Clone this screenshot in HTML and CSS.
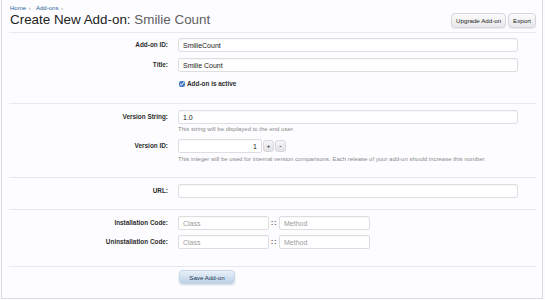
FILE: index.html
```html
<!DOCTYPE html>
<html lang="en">

<head>
    <meta charset="UTF-8">
    <meta name="viewport" content="width=device-width, initial-scale=1.0">
    <title>Create New Add-on</title>
    <link rel="stylesheet" href="styles.css">
</head>

<body>
    <div class="page">
        <div class="breadcrumb">
            <a href="#">Home</a> <span class="sep">&rsaquo;</span>
            <a href="#">Add-ons</a> <span class="sep">&rsaquo;</span>
        </div>
        <div class="title-bar">
            <h1>Create New Add-on: <span class="sub">Smilie Count</span></h1>
            <div class="top-ctrls">
                <button class="button">Upgrade Add-on</button>
                <button class="button">Export</button>
            </div>
        </div>

        <form class="form">
            <div class="section s1">
                <div class="row">
                    <label>Add-on ID:</label>
                    <div class="field"><input type="text" class="text" value="SmilieCount"></div>
                </div>
                <div class="row">
                    <label>Title:</label>
                    <div class="field"><input type="text" class="text" value="Smilie Count"></div>
                </div>
                <div class="row check-row">
                    <span></span>
                    <label class="check"><input type="checkbox" checked> Add-on is active</label>
                </div>
            </div>

            <div class="section s2">
                <div class="row">
                    <label>Version String:</label>
                    <div class="field">
                        <input type="text" class="text" value="1.0">
                        <p class="hint">This string will be displayed to the end user.</p>
                    </div>
                </div>
                <div class="row">
                    <label>Version ID:</label>
                    <div class="field">
                        <div class="spin">
                            <input type="text" class="text num" value="1">
                            <button type="button" class="spin-btn">+</button>
                            <button type="button" class="spin-btn">-</button>
                        </div>
                        <p class="hint">This integer will be used for internal version comparisons. Each release of your add-on should increase this number.</p>
                    </div>
                </div>
            </div>

            <div class="section s3">
                <div class="row">
                    <label>URL:</label>
                    <div class="field"><input type="text" class="text"></div>
                </div>
            </div>

            <div class="section s4">
                <div class="row">
                    <label>Installation Code:</label>
                    <div class="field callback">
                        <input type="text" class="text short" placeholder="Class">
                        <span class="colons">::</span>
                        <input type="text" class="text short" placeholder="Method">
                    </div>
                </div>
                <div class="row">
                    <label>Uninstallation Code:</label>
                    <div class="field callback">
                        <input type="text" class="text short" placeholder="Class">
                        <span class="colons">::</span>
                        <input type="text" class="text short" placeholder="Method">
                    </div>
                </div>
            </div>

            <div class="submit-row">
                <span></span>
                <div class="submit-cell"><button type="button" class="button primary">Save Add-on</button></div>
            </div>
        </form>
    </div>
</body>

</html>
```

FILE: styles.css
```css
* {
    margin: 0;
    padding: 0;
    box-sizing: border-box;
    font-family: "Liberation Sans", Arial, sans-serif;
}

body {
    background-color: #fcfcfe;
    height: 300px;
    overflow: hidden;
    font-size: 7px;
    line-height: 8px;
}

.page {
    margin: 0 2px 0 1px;
    height: 299px;
    padding: 0 6px 0 7px;
    border: 1px solid #dcdde2;
    border-top: none;
    background: #fdfdff;
}

.breadcrumb {
    padding-top: 5px;
    height: 13px;
    font-size: 6px;
    line-height: 7px;
    padding-left: 1px;
}

.breadcrumb a {
    color: #2a5f98;
    text-decoration: none;
    margin-right: 1px;
}

.breadcrumb .sep {
    color: #8a8a8a;
    margin-right: 4px;
}

.title-bar {
    display: flex;
    justify-content: space-between;
    align-items: flex-start;
    height: 20px;
    border-bottom: 1px solid #e6eaf0;
}

h1 {
    font-size: 13.4px;
    font-weight: normal;
    color: #222;
    line-height: 16px;
    padding-left: 1px;
    margin-top: -1px;
}

h1 .sub {
    color: #5e5e5e;
}

.top-ctrls {
    display: flex;
    gap: 2px;
}

.button {
    display: block;
    height: 15px;
    padding: 0 4px;
    font-size: 6.2px;
    color: #222;
    background: linear-gradient(#fbfbfb, #e9e9eb);
    border: 1px solid #d6d6da;
    border-radius: 4px;
    box-shadow: 0 1px 1px rgba(0, 0, 0, 0.08);
    cursor: pointer;
}

.section {
    border-bottom: 1px solid #e6eaf0;
}

.s1 {
    padding: 5px 0 15px;
}

.s2 {
    padding: 6px 0 14px;
}

.s3 {
    padding: 6px 0 11px;
}

.s4 {
    padding: 6px 0 17px;
}

.row,
.submit-row {
    display: grid;
    grid-template-columns: 169px 1fr;
    align-items: start;
}

.row + .row {
    margin-top: 6px;
}

.s4 .row + .row {
    margin-top: 5px;
}

.row > label {
    text-align: right;
    padding-right: 10px;
    font-size: 6.4px;
    font-weight: bold;
    color: #2c2c2c;
    line-height: 14px;
}

.field {
    padding-right: 18px;
}

.text {
    display: block;
    width: 100%;
    height: 14px;
    padding: 0 4px;
    font-size: 7px;
    color: #222;
    background: #fff;
    border: 1px solid #dedee2;
    border-radius: 2px;
    box-shadow: inset 0 1px 1px rgba(0, 0, 0, 0.03);
    outline: none;
}

.text::placeholder {
    color: #9a9a9a;
}

.hint {
    font-size: 6px;
    color: #8a8a8a;
    line-height: 7px;
    margin-top: 2px;
}

.s2 .row:last-child .hint {
    margin-top: 3px;
}

.spin {
    display: flex;
    align-items: center;
    gap: 1px;
}

.text.num {
    width: 84px;
    text-align: right;
}

.spin-btn {
    width: 11px;
    height: 12px;
    font-size: 6px;
    font-weight: bold;
    color: #333;
    background: linear-gradient(#f6f6f8, #e2e2e6);
    border: 1px solid #d8d8dc;
    border-radius: 3px;
    line-height: 10px;
    cursor: pointer;
}

.s1 .check-row {
    margin-top: 8px;
}

.check {
    display: flex;
    align-items: center;
    gap: 2px;
    height: 8px;
    font-size: 6.4px;
    font-weight: bold;
    color: #2c2c2c;
    padding-left: 1px;
    line-height: 8px;
}

.check input {
    width: 6px;
    height: 6px;
    accent-color: #4a7ec0;
}

.callback {
    display: flex;
    align-items: center;
}

.text.short {
    width: 91px;
}

.colons {
    width: 10px;
    text-align: center;
    font-size: 8px;
    font-weight: bold;
    letter-spacing: 0.5px;
    color: #666;
}

.submit-row {
    padding-top: 3px;
}

.submit-cell {
    display: flex;
}

.button.primary {
    width: 56px;
    height: 14px;
    margin-left: 1px;
    color: #1e3550;
    background: linear-gradient(#e8f0f8, #bcd1e7);
    border: 1px solid #c6d6e8;
    box-shadow: 0 1px 2px rgba(60, 90, 130, 0.25);
}
```
